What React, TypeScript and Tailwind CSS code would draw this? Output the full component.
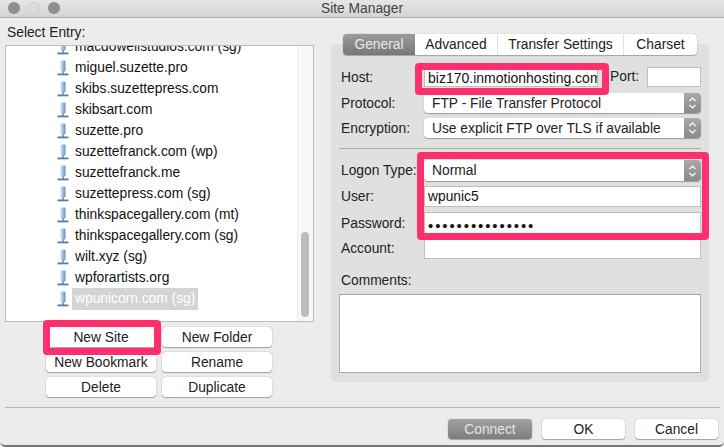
const sites = [
  "macdowellstudios.com (sg)",
  "miguel.suzette.pro",
  "skibs.suzettepress.com",
  "skibsart.com",
  "suzette.pro",
  "suzettefranck.com (wp)",
  "suzettefranck.me",
  "suzettepress.com (sg)",
  "thinkspacegallery.com (mt)",
  "thinkspacegallery.com (sg)",
  "wilt.xyz (sg)",
  "wpforartists.org",
];

function SiteIcon() {
  return (
    <svg width="12" height="17" viewBox="0 0 12 17" className="shrink-0">
      <defs>
        <linearGradient id="tube" x1="0" x2="1" y1="0" y2="0">
          <stop offset="0" stopColor="#cfe0f2" />
          <stop offset="0.5" stopColor="#9dbde0" />
          <stop offset="1" stopColor="#5f8dc0" />
        </linearGradient>
      </defs>
      <rect x="3.5" y="0.5" width="5" height="11" rx="1" fill="url(#tube)" />
      <rect x="5.3" y="11" width="1.4" height="3" fill="#5f86b3" />
      <rect x="0.5" y="13.6" width="11" height="1.6" rx="0.5" fill="#4f7cb0" />
      <rect x="0.5" y="15.2" width="11" height="0.8" fill="#c5d3e2" />
    </svg>
  );
}

function Stepper() {
  return (
    <span className="flex h-full w-[17px] flex-col items-center justify-center rounded-r-[4px] bg-gradient-to-b from-[#a9a9a9] to-[#8a8a8a]">
      <svg width="9" height="14" viewBox="0 0 9 14" fill="none" stroke="#fff" strokeWidth="1.2">
        <path d="M1.5 5 L4.5 2 L7.5 5" />
        <path d="M1.5 9 L4.5 12 L7.5 9" />
      </svg>
    </span>
  );
}

function Select({ value, className }: { value: string; className: string }) {
  return (
    <div className={`flex items-center justify-between rounded-[4px] bg-white pl-2 text-[#222] shadow-[0_1px_1px_#9a9a9a] ${className}`}>
      <span className="pt-px">{value}</span>
      <Stepper />
    </div>
  );
}

function Field({ value, className }: { value?: string; className: string }) {
  return (
    <div className={`flex items-center overflow-hidden whitespace-nowrap border border-[#bdbdbd] bg-white pl-[3px] text-[#111] ${className}`}>
      {value}
    </div>
  );
}

function Btn({ label, className = "bg-white text-[#222]" }: { label: string; className?: string }) {
  return (
    <div className={`flex items-center justify-center rounded-[4px] pt-[2px] shadow-[0_0_1px_#8a8a8a,0_1px_1px_#a5a5a5] ${className}`}>
      {label}
    </div>
  );
}

export default function App() {
  return (
    <div className="h-[448px] w-[724px] overflow-hidden bg-white font-['Liberation_Sans',sans-serif] text-[13.8px] leading-none text-[#222]">
      <div className="relative h-[447px] w-[724px] overflow-hidden rounded-b-[5px] border-b-2 border-[#777] bg-[#ececec]">
        {/* Title bar */}
        <div className="flex h-[18px] items-center justify-center border-b border-[#b3b3b3] bg-gradient-to-b from-[#e6e6e6] to-[#d4d4d4] text-[#444]">
          <div className="absolute left-2 top-[2px] flex gap-2">
            <span className="h-3 w-3 rounded-full bg-[#8f8e90]" />
            <span className="h-3 w-3 rounded-full bg-[#dcdcdc] shadow-[inset_0_0_1px_#aaa]" />
            <span className="h-3 w-3 rounded-full bg-[#8f8e90]" />
          </div>
          Site Manager
        </div>

        <div className="flex">
          {/* Left column */}
          <div className="w-[331px] pl-[5px]">
            <div className="pl-[2px] pt-[8px]">Select Entry:</div>
            <div className="mt-[5px] flex h-[277px] w-[309px] border border-[#bcbcbc] bg-white">
              <div className="flex min-w-0 flex-1 flex-col justify-end overflow-hidden pb-[11px] pl-[51px]">
                {sites.map((name) => (
                  <div key={name} className="flex h-[21px] shrink-0 items-center gap-[6px] whitespace-nowrap text-[#111]">
                    <SiteIcon />
                    {name}
                  </div>
                ))}
                <div className="flex h-[21px] shrink-0 items-center gap-[3px]">
                  <SiteIcon />
                  <span className="bg-[#d4d4d4] px-[3px] py-1 text-white">wpunicorn.com (sg)</span>
                </div>
              </div>
              <div className="flex w-[16px] items-end border-l border-[#ececec] bg-[#f8f8f8] pb-[4px] pl-[3px]">
                <div className="h-[85px] w-[8px] rounded-full bg-[#bdbdbd]" />
              </div>
            </div>
            <div className="ml-[41px] mt-[5px] grid w-[226px] grid-cols-2 gap-x-[6px] gap-y-[5px] [&>div]:h-[20px]">
              <Btn label="New Site" />
              <Btn label="New Folder" />
              <Btn label="New Bookmark" />
              <Btn label="Rename" />
              <Btn label="Delete" />
              <Btn label="Duplicate" />
            </div>
          </div>

          {/* Right column */}
          <div className="relative mt-[26px] h-[338px] w-[378px] rounded-[5px] bg-[#e0e0e0] px-2 pt-[23px]">
            <div className="absolute left-3 top-[-10px] flex h-[21px] w-[354px] overflow-hidden rounded-[4px] bg-white shadow-[0_0_1px_#8a8a8a,0_1px_1px_#a5a5a5]">
              <div className="flex w-[72px] items-center justify-center bg-gradient-to-b from-[#9c9c9e] to-[#77777a] text-[#e8e8e8]">General</div>
              <div className="flex w-[83px] items-center justify-center border-r border-[#e2e2e2]">Advanced</div>
              <div className="flex w-[126px] items-center justify-center border-r border-[#e2e2e2]">Transfer Settings</div>
              <div className="flex w-[73px] items-center justify-center">Charset</div>
            </div>

            <div className="grid w-[362px] grid-cols-[85px_1fr] items-center gap-y-[5px]">
              <span className="pl-[2px]">Host:</span>
              <div className="mb-px flex items-center">
                <Field value="biz170.inmotionhosting.com" className="h-5 w-[174px] pt-px text-[14px]" />
                <span className="ml-3 w-[37px]">Port:</span>
                <Field className="h-5 w-[54px]" />
              </div>
              <span className="pl-[2px] pt-px">Protocol:</span>
              <Select value="FTP - File Transfer Protocol" className="h-5" />
              <span className="pl-[2px] pt-px">Encryption:</span>
              <Select value="Use explicit FTP over TLS if available" className="h-5" />
            </div>

            <div className="mt-[10px] h-px w-[362px] bg-[#a9a9a9]" />

            <div className="mt-[11px] grid w-[362px] grid-cols-[85px_1fr] items-center gap-y-[5px]">
              <span className="pl-[2px]">Logon Type:</span>
              <Select value="Normal" className="h-[21px]" />
              <span className="pl-[2px]">User:</span>
              <Field value="wpunic5" className="h-[21px] pt-px" />
              <span className="pl-[2px] pt-px">Password:</span>
              <Field value="•••••••••••••••" className="h-[22px] pt-[4px] text-[15px] tracking-[1.9px]" />
              <span className="pl-[2px]">Account:</span>
              <Field className="h-[20px]" />
            </div>

            <div className="mt-[15px] pl-[2px]">Comments:</div>
            <div className="mt-[6px] h-[79px] w-[362px] border border-[#a9a9a9] bg-white" />
          </div>
        </div>

        {/* Footer */}
        <div className="ml-[5px] mt-[10px] h-px w-[715px] bg-[#b5b5b5]" />
        <div className="mt-[11px] flex justify-end gap-[10px] pr-[6px] [&>div]:h-5">
          <Btn label="Connect" className="w-[84px] bg-gradient-to-b from-[#a2a2a4] to-[#7d7d80] text-[#e4e4e4]" />
          <Btn label="OK" className="w-[83px] bg-white text-[#222]" />
          <Btn label="Cancel" className="w-[83px] bg-white text-[#222]" />
        </div>

        {/* Pink callouts drawn over the screenshot */}
        <div className="absolute left-[415px] top-[63px] h-[32px] w-[194px] rounded-[4px] border-[7px] border-[#fe2f6c]" />
        <div className="absolute left-[417px] top-[152px] h-[88px] w-[292px] rounded-[4px] border-[7px] border-[#fe2f6c]" />
        <div className="absolute left-[43px] top-[320px] h-[35px] w-[118px] rounded-[4px] border-[7px] border-[#fe2f6c]" />
      </div>
    </div>
  );
}
